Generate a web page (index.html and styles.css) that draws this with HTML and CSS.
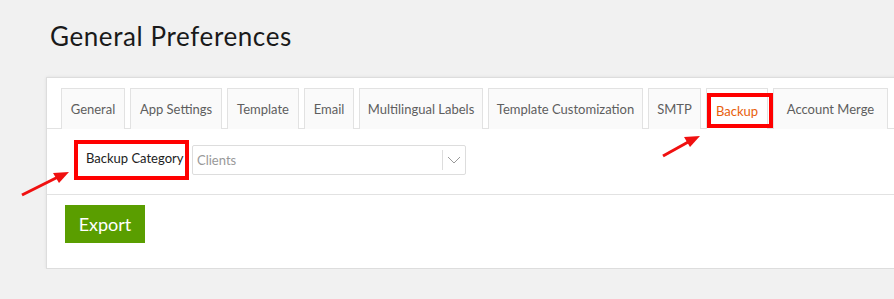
FILE: index.html
```html
<!DOCTYPE html>
<html lang="en">
<head>
  <meta charset="UTF-8">
  <title>General Preferences</title>
  <link rel="stylesheet" href="styles.css">
</head>
<body>
  <div class="page">
    <h1 class="page-title">General Preferences</h1>

    <div class="panel">
      <div class="tabs">
        <div class="tab tab-general">General</div>
        <div class="tab tab-app">App Settings</div>
        <div class="tab tab-template">Template</div>
        <div class="tab tab-email">Email</div>
        <div class="tab tab-labels">Multilingual Labels</div>
        <div class="tab tab-custom">Template Customization</div>
        <div class="tab tab-smtp">SMTP</div>
        <div class="tab tab-backup active">Backup</div>
        <div class="tab tab-merge">Account Merge</div>
      </div>

      <div class="form-row">
        <label class="field-label">Backup Category</label>
        <div class="select">
          <span class="select-value">Clients</span>
          <span class="select-arrow">
            <svg width="14" height="8" viewBox="0 0 14 8"><path d="M1 1 L7 7 L13 1" fill="none" stroke="#999" stroke-width="1"/></svg>
          </span>
        </div>
      </div>

      <div class="actions">
        <button class="btn-export">Export</button>
      </div>
    </div>
  </div>

  <!-- screenshot annotations -->
  <div class="mark mark-tab"></div>
  <div class="mark mark-label"></div>
  <svg class="arrows" width="894" height="299" viewBox="0 0 894 299">
    <line x1="663" y1="156" x2="690" y2="141" stroke="#f01010" stroke-width="3"/>
    <polygon points="700,136 684,137 690,147" fill="#f01010"/>
    <line x1="22" y1="195" x2="58" y2="177" stroke="#f01010" stroke-width="3"/>
    <polygon points="69,172 53,173 59,183" fill="#f01010"/>
  </svg>
</body>
</html>
```

FILE: styles.css
```css
body {
  margin: 0;
  background: #f1f1f1;
  font-family: Lato, "Open Sans", sans-serif;
  overflow: hidden;
}

.page {
  padding: 21px 0 0 46px;
}

.page-title {
  margin: 0 0 26px 4px;
  font-size: 26px;
  font-weight: 400;
  letter-spacing: 0.6px;
  color: #1a1a1a;
  line-height: 30px;
}

.panel {
  background: #fff;
  border: 1px solid #ddd;
  border-right: none;
  box-shadow: 0 0 3px rgba(0, 0, 0, 0.08);
  width: 900px;
}

.tabs {
  display: flex;
  gap: 5px;
  padding: 10px 0 0 14px;
  border-bottom: 1px solid #e2e2e2;
}

.tab {
  box-sizing: border-box;
  height: 41px;
  line-height: 40px;
  margin-bottom: -1px;
  text-align: center;
  background: #fafafa;
  border: 1px solid #e2e2e2;
  border-bottom: none;
  font-size: 13px;
  color: #5e5e5e;
}

.tab-general { width: 64px; }
.tab-app { width: 92px; }
.tab-template { width: 72px; }
.tab-email { width: 50px; }
.tab-labels { width: 124px; }
.tab-custom { width: 155px; }
.tab-smtp { width: 53px; }
.tab-backup { width: 62px; }
.tab-merge { width: 115px; }

.tab.active {
  background: #fff;
  color: #e8600c;
  padding-top: 4px;
  line-height: 36px;
}

.form-row {
  display: flex;
  align-items: center;
  padding: 16px 0 19px 39px;
  border-bottom: 1px solid #e2e2e2;
}

.field-label {
  width: 106px;
  font-size: 13px;
  color: #222;
  margin-top: -4px;
}

.select {
  display: flex;
  align-items: center;
  width: 274px;
  height: 30px;
  box-sizing: border-box;
  border: 1px solid #ddd;
  border-radius: 2px;
}

.select-value {
  flex: 1;
  padding-left: 4px;
  font-size: 13px;
  color: #999;
}

.select-arrow {
  display: flex;
  align-items: center;
  justify-content: center;
  width: 22px;
  height: 20px;
  border-left: 1px solid #ddd;
}

.actions {
  padding: 10px 0 25px 18px;
}

.btn-export {
  display: block;
  width: 80px;
  height: 38px;
  background: #5a9e00;
  border: none;
  color: #fff;
  font-family: Lato, "Open Sans", sans-serif;
  font-size: 18px;
  cursor: pointer;
}

.mark {
  position: absolute;
  border: 4px solid #f00;
  box-sizing: border-box;
}

.mark-tab {
  left: 707px;
  top: 93px;
  width: 66px;
  height: 35px;
}

.mark-label {
  left: 74px;
  top: 140px;
  width: 115px;
  height: 40px;
}

.arrows {
  position: absolute;
  left: 0;
  top: 0;
}
```
